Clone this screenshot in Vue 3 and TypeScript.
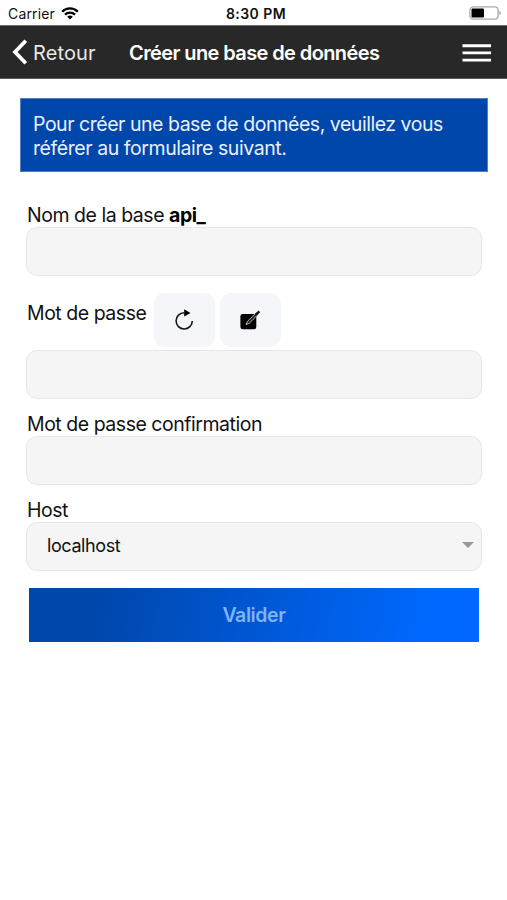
<script setup lang="ts">
import { ref } from 'vue'

const databaseName = ref('')
const password = ref('')
const confirmation = ref('')
const hosts: string[] = ['localhost']
const host = ref(hosts[0])
</script>

<template>
  <div class="screen">
    <div class="status">
      <div class="carrier">
        <span class="carrier-name">Carrier</span>
        <svg class="wifi" width="18" height="13" viewBox="0 0 18 13">
          <path d="M1.2 4.7a11 11 0 0 1 15.6 0M4 7.6a7.1 7.1 0 0 1 10 0" fill="none" stroke="#000" stroke-width="2.3" />
          <path d="M9 12.6 6.2 9.8a4 4 0 0 1 5.6 0z" />
        </svg>
      </div>
      <span class="clock">8:30 PM</span>
      <svg class="battery" width="32" height="14" viewBox="0 0 32 14">
        <rect x=".9" y=".9" width="28.2" height="12.2" rx="3.4" fill="#fff" stroke="#a9a9a9" stroke-width="1.3" />
        <rect x="2.5" y="2.5" width="12.5" height="9" rx="1" />
        <path d="M30.3 4.8c2 .7 2 3.7 0 4.4z" fill="#a9a9a9" />
      </svg>
    </div>

    <header class="nav">
      <button class="back" type="button">
        <svg width="16" height="26" viewBox="0 0 16 26">
          <path d="M13.8 1.7 3 13l10.8 11.3" fill="none" stroke="#fff" stroke-width="3.8" />
        </svg>
        <span class="back-text">Retour</span>
      </button>
      <h1 class="title">Créer une base de données</h1>
      <button class="menu" type="button" aria-label="Menu">
        <svg width="29" height="18" viewBox="0 0 29 18">
          <path d="M.5 1.7h28.5M.5 8.9h28.5M.5 16.1h28.5" stroke="#fff" stroke-width="2.9" />
        </svg>
      </button>
    </header>

    <main class="content">
      <p class="info">
        Pour créer une base de données, veuillez vous<br />
        <span class="second-line">référer au formulaire suivant.</span>
      </p>

      <form class="form" @submit.prevent>
        <label class="label" for="name">Nom de la base <b>api_</b></label>
        <input id="name" v-model="databaseName" class="field" type="text" />

        <div class="password-row">
          <label class="label" for="password">Mot de passe</label>
          <button class="tool" type="button" aria-label="Générer">
            <svg width="20" height="22" viewBox="0 0 20 22">
              <path d="M9.2 3.8A8.1 8.1 0 1 0 17.3 12" fill="none" stroke="#151515" stroke-width="1.6" />
              <path d="M9.2.2 15.5 3.9 9.2 7.6z" fill="#000" />
            </svg>
          </button>
          <button class="tool" type="button" aria-label="Modifier">
            <svg width="21" height="20" viewBox="0 0 21 20">
              <rect x=".4" y="4" width="15.9" height="15.2" rx="2.3" />
              <path d="M16.3 2.6 7.4 11.4 6 14.6l3.2-1.3 8.9-8.9z" fill="#222" stroke="#c4c6ca" stroke-width=".9" />
              <path d="M15.6 4.9 19.4 1.3" stroke="#151515" stroke-width="2.3" />
            </svg>
          </button>
        </div>
        <input id="password" v-model="password" class="field" type="password" />

        <label class="label gap" for="confirmation">Mot de passe confirmation</label>
        <input id="confirmation" v-model="confirmation" class="field" type="password" />

        <label class="label gap" for="host">Host</label>
        <div class="select-wrap">
          <select id="host" v-model="host" class="field select">
            <option v-for="item in hosts" :key="item" :value="item">{{ item }}</option>
          </select>
          <svg class="caret" width="12" height="6" viewBox="0 0 12 6"><path d="M0 0h12L6 6z" fill="#999" /></svg>
        </div>

        <button class="submit" type="submit">Valider</button>
      </form>
    </main>
  </div>
</template>

<style>
body {
  margin: 0;
  background: #fff;
}
</style>

<style scoped>
.screen {
  width: 507px;
  height: 900px;
  overflow: hidden;
  background: #fff;
  color: #111;
  font-family: Inter, "Liberation Sans", sans-serif;
}
button {
  font-family: inherit;
  border: 0;
  padding: 0;
  margin: 0;
}
.status {
  box-sizing: border-box;
  height: 25px;
  padding: 1px 6px 0 8px;
  display: grid;
  grid-template-columns: 1fr auto 1fr;
  align-items: center;
}
.carrier {
  display: flex;
  align-items: center;
  gap: 6px;
}
.carrier-name {
  font-size: 14px;
  line-height: 20px;
  padding-top: 2px;
  letter-spacing: 0.15px;
}
.clock {
  font-size: 14px;
  font-weight: 600;
  line-height: 20px;
  padding: 2px 0 0 3px;
  letter-spacing: 0.45px;
}
.battery {
  justify-self: end;
}
.nav {
  box-sizing: border-box;
  height: 54px;
  padding: 0 16px 0 12px;
  display: flex;
  align-items: center;
  background: #282828;
  border-top: 1px solid #6c6c6c;
  border-bottom: 1px solid #5a5a5a;
}
.back {
  display: flex;
  align-items: center;
  gap: 5px;
  width: 117px;
  background: none;
  color: #e8e8e8;
  font-size: 20px;
  letter-spacing: 0.1px;
}
.back-text {
  padding-top: 1px;
}
.title {
  margin: 0;
  flex: 1;
  white-space: nowrap;
  font-size: 20px;
  font-weight: 600;
  line-height: 26px;
  letter-spacing: -0.6px;
  color: #fff;
  padding-top: 1px;
}
.menu {
  width: 29px;
  display: grid;
  background: none;
  padding-top: 1px;
}
.content {
  padding: 19px 20px 0;
}
.info {
  box-sizing: border-box;
  margin: 0;
  width: 468px;
  height: 74px;
  padding: 13px 12px 0;
  background: #0047ab;
  border: 1px solid #4d80c6;
  color: #e9f0fb;
  font-size: 19.5px;
  line-height: 24px;
  letter-spacing: -0.47px;
  white-space: nowrap;
}
.second-line {
  letter-spacing: -0.43px;
}
.form {
  padding: 31px 6px 0;
}
.label {
  display: block;
  height: 24px;
  font-size: 19.5px;
  line-height: 24px;
  letter-spacing: -0.47px;
  padding-left: 1px;
  white-space: nowrap;
}
.label b {
  color: #000;
}
.field {
  box-sizing: border-box;
  display: block;
  width: 456px;
  height: 49px;
  margin: 0;
  border: 1px solid #e7e7e7;
  border-radius: 11px;
  background: #f5f5f5;
  color: #111;
  padding: 0 20px;
  font-family: inherit;
  font-size: 18px;
  letter-spacing: -0.4px;
}
.password-row {
  display: flex;
  align-items: flex-start;
  height: 57px;
  margin-top: 17px;
}
.password-row .label {
  width: 128px;
  padding-top: 8px;
  box-sizing: border-box;
}
.tool {
  display: grid;
  place-items: center;
  width: 61px;
  height: 54px;
  margin-right: 5px;
  border-radius: 11px;
  background: #f4f6fa;
}
.gap {
  margin-top: 13px;
}
.select-wrap {
  display: grid;
  align-items: center;
}
.select-wrap > * {
  grid-area: 1 / 1;
}
.select {
  appearance: none;
  padding-bottom: 2px;
}
.caret {
  justify-self: end;
  margin: 0 8px 3px 0;
  pointer-events: none;
}
.submit {
  display: block;
  width: 450px;
  height: 54px;
  margin: 17px 0 0 3px;
  background: linear-gradient(100deg, #0047ab 15%, #0068ff 88%);
  color: #80b2f6;
  font-size: 19.5px;
  font-weight: 600;
  letter-spacing: -0.4px;
}
</style>
